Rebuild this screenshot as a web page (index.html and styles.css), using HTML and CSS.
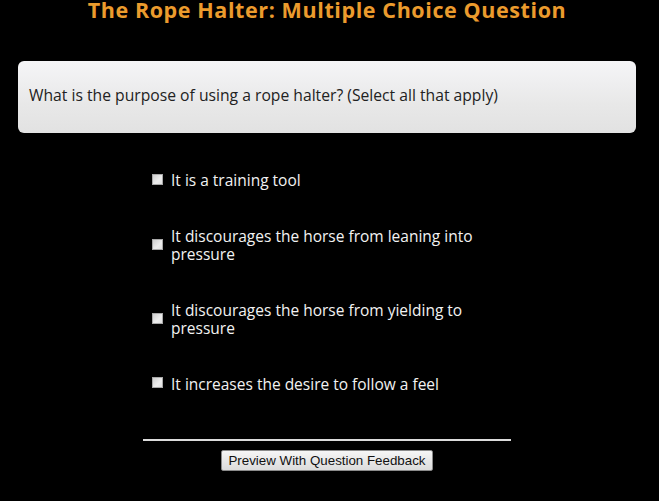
FILE: index.html
```html
<!DOCTYPE html>
<html lang="en">
<head>
  <meta charset="UTF-8" />
  <title>The Rope Halter: Multiple Choice Question</title>
  <link rel="stylesheet" href="styles.css">
</head>
<body>
  <div class="page">
    <h1>The Rope Halter: Multiple Choice Question</h1>

    <div class="question">What is the purpose of using a rope halter? (Select all that apply)</div>

    <div class="choices">
      <label class="choice"><input type="checkbox" /><span>It is a training tool</span></label>
      <label class="choice"><input type="checkbox" /><span>It discourages the horse from leaning into pressure</span></label>
      <label class="choice"><input type="checkbox" /><span>It discourages the horse from yielding to pressure</span></label>
      <label class="choice"><input type="checkbox" /><span>It increases the desire to follow a feel</span></label>
    </div>

    <hr class="divider" />

    <div class="actions">
      <button>Preview With Question Feedback</button>
    </div>
  </div>
</body>
</html>
```
FILE: styles.css
```css
body {
  margin: 0;
  background: #000;
  font-family: "Open Sans", "Liberation Sans", sans-serif;
  font-size: 15.5px;
  overflow: hidden;
}
.page {
  margin: 0 23px 0 18px;
}
h1 {
  margin: 0;
  padding-top: 1px;
  font-size: 21.5px;
  line-height: 17px;
  letter-spacing: 0.6px;
  font-weight: bold;
  text-align: center;
  color: #eb9b2d;
}
.question {
  margin-top: 43px;
  padding: 25px 11px 28px;
  font-size: 15.7px;
  line-height: 19px;
  color: #222;
  border-radius: 6px;
  background: linear-gradient(#f5f5f7, #e8e8e8 60%, #e2e2e2);
}
.choices {
  width: 368px;
  margin: 0 auto;
  padding: 38px 0 0 9px;
  box-sizing: border-box;
  display: flex;
  flex-direction: column;
  gap: 37px;
}
.choice {
  display: flex;
  align-items: center;
  gap: 8px;
  color: #f2f2f2;
  line-height: 18.5px;
}
.choice input {
  appearance: none;
  flex: none;
  width: 11px;
  height: 11px;
  margin: -2px 0 0 0;
  border: 1px solid #a8a8a8;
  background: linear-gradient(135deg, #cfcfcf, #eeeeee 60%, #e0e0e0);
}
.divider {
  width: 368px;
  margin: 46px auto 0;
  border: 0;
  border-top: 2px solid #dcdcdc;
}
.actions {
  text-align: center;
  padding-top: 7px;
}
button {
  font-family: "Liberation Sans", Arial, sans-serif;
  font-size: 13.33px;
  line-height: 15px;
  padding: 2px 6px;
  color: #111;
  border: 1px solid #8a8a8a;
  border-radius: 2px;
  background: linear-gradient(#f6f6f6, #e8e8e8 50%, #dcdcdc);
}
```
